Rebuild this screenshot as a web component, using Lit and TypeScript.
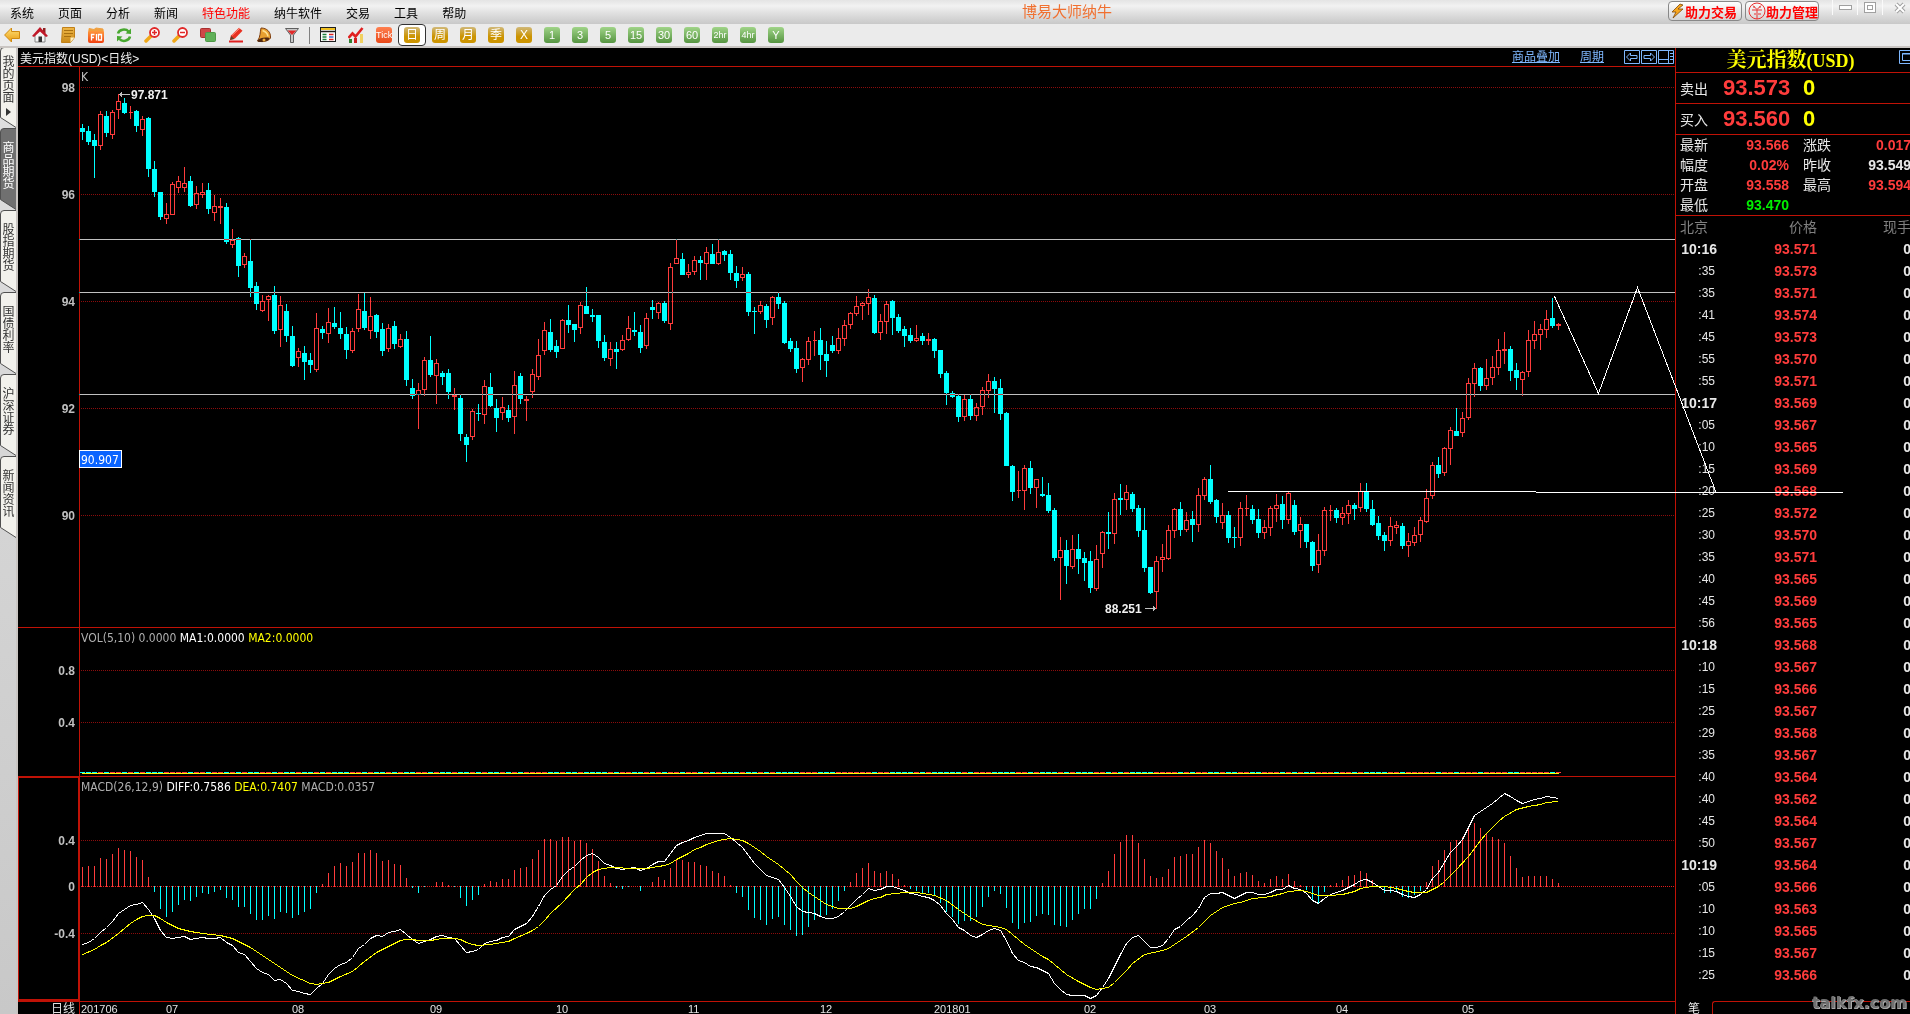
import { LitElement, html, svg, css } from "lit";
import { customElement } from "lit/decorators.js";
import { classMap } from "lit/directives/class-map.js";

/* One candle: direction (u/d), high, open/close top, open/close bottom, low. */
const CANDLES = `
d124,128,132,140 d126,131,142,145 d134,140,146,178 u111,114,146,150 d111,116,133,137 u110,112,135,139
u94,101,110,119 d98,103,113,114 u106,112,113,119 d110,111,126,132 u116,119,130,136 d117,118,169,177
d161,169,192,197 d192,192,217,220 u203,214,219,224 u182,184,215,215 u176,181,188,193 u167,183,188,192
d176,181,206,207 u186,193,205,209 u183,192,195,198 d183,190,209,214 u195,206,213,221 u198,206,208,224
d203,207,242,244 u229,240,245,248 d237,238,266,277 u253,256,265,268 d239,261,288,297 d282,286,304,310
u295,301,311,312 u295,296,300,321 d286,295,331,334 u296,305,330,347 d304,311,336,342 d326,336,366,367
u348,351,358,367 d346,353,362,380 d353,360,365,373 u313,328,370,372 d326,329,333,339 u308,322,334,343
d307,323,327,329 d312,328,334,339 d327,334,350,359 u328,331,351,353 u294,309,329,332 d293,311,328,330
u297,316,331,339 d314,315,332,338 d323,329,351,356 u324,328,349,352 d321,326,344,349 u334,339,347,348
d331,339,380,386 d379,388,396,399 u383,390,395,429 u357,360,390,396 d336,360,375,377 u359,363,376,404
d371,373,377,385 d369,373,392,399 u388,395,397,410 d394,398,434,441 d434,437,445,462 u409,411,437,440
d404,413,414,421 u380,386,415,424 d373,387,406,407 d399,408,418,432 u397,407,413,420 d405,410,418,422
u371,385,417,434 d373,376,399,404 u396,399,401,421 u369,374,392,398 u339,355,377,380 u322,330,351,355
d319,332,350,352 d340,346,352,358 u319,320,349,349 d305,320,325,333 d324,324,330,342 u302,305,328,334
d287,306,314,314 d309,315,317,322 d315,315,341,348 d335,342,358,361 u342,349,359,366 d342,349,352,369
u335,340,350,351 u316,328,340,341 d312,330,332,336 d325,332,348,353 u313,318,346,349 d300,307,310,319
u302,303,313,319 d301,303,321,323 u263,267,324,330 u239,258,264,264 d253,259,275,275 u264,272,275,278
u256,260,272,275 d256,260,263,280 u247,252,264,280 d244,254,264,264 u239,252,264,265 d250,251,255,261
d250,254,273,280 d266,273,281,288 u267,274,278,281 d272,274,312,316 d307,311,312,334 u301,305,312,314
d304,306,320,328 u296,297,318,325 d292,297,304,309 d301,303,343,344 d338,341,349,352 d341,348,369,373
u358,359,368,382 u337,341,360,365 u331,340,341,356 d328,340,355,370 d341,354,361,377 d336,345,351,353
u328,338,351,354 u320,325,339,346 u312,313,325,329 u296,306,314,316 u302,303,306,320 u289,297,304,315
d295,298,333,334 u314,321,333,340 u301,304,322,334 d300,301,318,335 d314,317,331,333 d326,329,336,347
d328,335,341,343 u325,338,341,342 d333,336,341,345 u333,339,341,345 d338,339,351,358 d350,350,374,378
d371,373,393,405 d391,393,397,398 d394,396,417,422 u395,399,417,421 d394,399,416,420 u403,407,416,421
u387,390,407,415 u374,381,391,398 d377,381,389,413 d379,388,414,420 d412,413,466,466 d465,466,492,501
u471,490,491,498 u465,468,491,510 d461,468,488,494 u479,479,488,508 d477,494,496,497 d483,495,511,513
d508,510,558,561 u537,550,558,600 d540,550,566,584 u535,549,567,569 d534,549,559,574 d552,558,563,581
d551,561,588,593 u545,559,589,591 u531,532,554,568 d512,532,534,549 u493,499,534,544 d484,498,500,515
u485,492,500,510 d492,494,509,512 d505,508,531,537 d508,530,568,572 d567,567,593,594 u556,561,592,609
u544,557,560,572 u525,530,559,560 u508,509,531,538 d502,509,530,536 u512,520,530,532 d511,519,525,542
u488,495,525,532 u477,479,496,500 d465,479,502,504 d499,500,517,523 u503,515,523,529 d511,515,538,543
d527,537,538,548 u502,508,538,546 u495,508,509,516 d505,509,520,524 d509,519,533,538 u520,527,533,539
u506,508,528,536 u494,505,509,522 d496,504,520,529 u492,493,520,524 d500,505,532,535 u517,524,531,548
d524,524,542,548 d541,542,566,571 u534,550,565,573 u507,510,551,556 u505,510,511,521 d508,510,518,523
u507,513,518,525 u500,505,514,524 d503,505,509,520 u483,491,508,512 d483,492,509,512 d500,509,525,526
d516,523,536,540 d532,535,541,551 u517,526,541,546 u521,525,528,534 d523,526,546,549 u533,541,546,557
u527,535,543,546 u517,520,535,542 u489,498,522,523 u462,465,496,499 d457,465,474,478 u447,448,473,476
u427,430,449,465 d408,431,436,436 u412,418,433,437 u378,383,418,420 u363,368,384,397 d367,368,386,391
u359,378,386,390 u356,367,378,385 u339,350,368,375 u332,349,351,364 d346,349,371,381 d363,370,378,390
u371,372,380,396 u330,340,372,377 u321,334,341,349 u324,329,335,350 u310,319,330,338 d298,318,326,328
u323,324,326,330`
  .trim()
  .split(/\s+/)
  .map((s) => ({ up: s[0] === "u", v: s.slice(1).split(",").map(Number) }));

const HISTOGRAM = [
  19, 20, 20, 28, 27, 32, 38, 36, 35, 29, 26, 9, -6, -23, -31, -26, -19, -14, -15, -11, -7, -8, -6, -4, -12, -14, -21,
  -21, -28, -34, -34, -30, -33, -26, -27, -32, -29, -26, -23, -7, 2, 13, 20, 23, 20, 24, 33, 33, 36, 33, 25, 26, 22, 21,
  8, -2, -7, -1, 0, 4, 4, 1, -1, -12, -20, -14, -9, 2, 5, 4, 7, 7, 16, 18, 19, 27, 36, 47, 47, 45, 49, 49, 45, 46, 43,
  37, 25, 10, 3, -2, -3, -1, 0, -5, 0, 4, 9, 6, 18, 27, 26, 24, 24, 21, 20, 15, 13, 10, 1, -7, -11, -24, -32, -34, -39,
  -33, -31, -39, -44, -50, -49, -41, -34, -31, -29, -23, -15, -5, 4, 13, 18, 23, 15, 13, 15, 12, 7, 1, -3, -5, -7, -7,
  -10, -17, -26, -31, -38, -35, -35, -31, -21, -11, -5, -8, -22, -37, -43, -37, -36, -30, -28, -29, -39, -40, -41, -34,
  -28, -23, -23, -13, 3, 15, 32, 44, 51, 51, 43, 27, 10, 8, 9, 17, 29, 30, 32, 32, 39, 46, 43, 35, 28, 17, 10, 13, 14,
  11, 5, 3, 7, 10, 7, 12, 5, 1, -4, -14, -17, -6, 1, 3, 6, 10, 11, 15, 13, 6, -1, -7, -7, -5, -11, -12, -9, -5, 4, 20,
  26, 36, 44, 46, 49, 57, 63, 58, 52, 49, 47, 43, 30, 18, 9, 10, 10, 10, 10, 7, 3,
];

const DIFF = [
  944, 942, 938, 932, 927, 921, 913, 909, 905, 904, 902, 909, 918, 930, 937, 938, 937, 936, 939, 938, 937, 938, 938,
  937, 942, 945, 952, 954, 961, 968, 972, 974, 980, 979, 983, 990, 991, 993, 994, 988, 983, 974, 968, 964, 962, 957,
  948, 944, 938, 935, 936, 932, 931, 929, 934, 939, 943, 941, 939, 936, 935, 937, 938, 945, 952, 951, 949, 943, 941,
  940, 937, 936, 929, 926, 923, 916, 906, 895, 889, 885, 876, 870, 866, 860, 855, 853, 857, 863, 865, 868, 869, 868,
  867, 870, 868, 864, 861, 861, 853, 845, 842, 840, 837, 835, 833, 833, 833, 833, 837, 842, 847, 855, 863, 869, 875,
  877, 879, 887, 896, 906, 911, 912, 913, 916, 918, 918, 916, 911, 905, 899, 894, 888, 890, 889, 886, 886, 888, 890,
  893, 894, 896, 897, 900, 905, 913, 919, 927, 930, 935, 937, 934, 930, 928, 930, 940, 953, 960, 962, 966, 967, 970,
  973, 983, 989, 994, 995, 995, 995, 998, 995, 987, 978, 966, 954, 943, 937, 935, 941, 947, 947, 945, 938, 929, 926,
  920, 915, 908, 897, 893, 893, 892, 895, 898, 895, 892, 892, 894, 894, 892, 889, 889, 885, 888, 889, 893, 900, 903,
  898, 894, 892, 890, 887, 884, 880, 879, 882, 886, 890, 890, 891, 894, 896, 897, 894, 889, 878, 872, 862, 852, 846,
  839, 827, 815, 811, 807, 803, 798, 793, 796, 800, 803, 801, 799, 798, 796, 797, 798,
];

/* Signal line knots: candle index and level. */
const DEA: [number, number][] = (
  "0:954 2:949 3:945 4:942 6:933 8:923 9:919 10:916 11:915 12:915 13:918 14:922 16:928 18:931 20:933 23:935 25:938 " +
  "26:941 28:947 30:955 32:963 33:967 35:975 38:983 39:984 40:983 41:982 43:976 45:971 46:966 47:961 49:952 51:946 " +
  "53:940 54:939 55:939 56:940 58:940 60:938 62:938 63:939 64:942 65:944 66:945 68:944 71:941 72:938 74:933 75:930 " +
  "76:926 77:920 78:913 80:902 82:889 83:884 84:877 85:872 86:869 88:867 89:867 91:868 94:868 95:867 97:865 98:863 " +
  "99:859 101:853 102:849 103:847 104:844 106:840 108:838 110:840 111:843 113:851 114:856 116:864 118:874 119:881 " +
  "120:887 121:892 123:900 124:904 126:908 128:908 129:906 130:903 131:900 132:898 133:897 134:894 137:892 139:892 " +
  "142:895 144:900 146:909 148:917 150:924 153:927 154:929 155:934 157:944 160:956 161:959 164:974 166:981 168:987 " +
  "169:989 171:987 172:982 173:976 174:970 175:963 177:954 180:950 181:948 184:936 186:927 188:915 190:907 192:903 " +
  "193:902 195:898 197:897 198:896 200:893 201:891 203:890 204:891 206:895 208:895 210:894 212:891 213:888 215:886 " +
  "217:886 219:888 221:891 222:892 224:892 226:886 227:881 229:869 231:856 233:840 234:833 235:827 236:821 237:816 " +
  "239:809 241:806 243:804 244:802 246:801"
)
  .split(" ")
  .map((p) => p.split(":").map(Number) as [number, number]);

const TICKS = (
  "10:16 571,:35 573,:35 571,:41 574,:45 573,:55 570,:55 571,10:17 569,:05 567,:10 565,:15 569,:20 568,:25 572," +
  ":30 570,:35 571,:40 565,:45 569,:56 565,10:18 568,:10 567,:15 566,:25 567,:29 568,:35 567,:40 564,:40 562," +
  ":45 564,:50 567,10:19 564,:05 566,:10 563,:10 565,:15 567,:25 566"
)
  .split(",")
  .map((t) => t.split(" "));

/* Candle pitch is 6px; the plot starts right of the axis column. */
const AXIS = 61;
const cx = (k: number) => AXIS + 3 + 6 * k;

const PRICE_TOP = 67;
const MACD_TOP = 777;
const ZERO = 886 - MACD_TOP;

@customElement("price-panel")
export class PricePanel extends LitElement {
  static styles = css`
    :host { display: block; height: 560px; }
    svg { display: block; width: 100%; height: 100%; font: bold 12px "Liberation Sans", Arial, sans-serif; }
    .crisp { shape-rendering: crispEdges; fill: none; }
    .grid { stroke: #8c0c0c; stroke-dasharray: 1 1; }
    .frame { stroke: #c01206; }
    .level { stroke: #c0c0c0; mix-blend-mode: difference; }
    .up { stroke: #ff3c3c; }
    .down { stroke: #00ffff; }
    .body { fill: #00ffff; }
    .scale { fill: #c0c0c0; text-anchor: end; }
    .name { fill: #c0c0c0; font: 12px "DejaVu Sans Condensed", "Noto Sans", sans-serif; }
    .mark { fill: #f0f0f0; }
    .arrow { stroke: #c0c0c0; }
    .cursor { fill: #0a64ff; stroke: #ffffff; shape-rendering: crispEdges; }
    .cursor-text { fill: #ffffff; font: 12px "DejaVu Sans Condensed", "Noto Sans", sans-serif; }
  `;

  render() {
    let up = "";
    let down = "";
    let body = "";
    CANDLES.forEach((c, k) => {
      const [h, t, b, l] = c.v.map((n) => n - PRICE_TOP);
      const x = cx(k);
      if (c.up) {
        up += `M${x + 0.5} ${h}V${t}M${x + 0.5} ${b}V${l}M${x - 1.5} ${t + 0.5}h4v${b - t - 1}h-4z`;
      } else {
        down += `M${x + 0.5} ${h}V${l}`;
        body += `M${x - 2} ${t}h5v${b - t}h-5z`;
      }
    });
    const rows = [98, 96, 94, 92, 90].map((v, i) => ({ v, y: 20 + i * 107 }));
    return html`<svg role="img" aria-label="K">
      ${rows.map(
        (r) => svg`<line class="crisp grid" x1="63" x2="100%" y1=${r.y + 0.5} y2=${r.y + 0.5}></line>
          <text class="scale" x="57" y=${r.y + 5}>${r.v}</text>`
      )}
      <line class="crisp frame" x1="61.5" x2="61.5" y1="0" y2="100%"></line>
      <path class="crisp up" d=${up}></path>
      <path class="crisp down" d=${down}></path>
      <path class="body" d=${body}></path>
      ${[172, 225, 327].map(
        (y) => svg`<line class="crisp level" x1="61" x2="100%" y1=${y + 0.5} y2=${y + 0.5}></line>`
      )}
      <text class="name" x="63" y="14">K</text>
      <path class="crisp arrow" d="M101 27.5h11M102.5 26v3M103.5 25v5"></path>
      <text class="mark" x="113" y="32">97.871</text>
      <text class="mark" x="1087" y="546">88.251</text>
      <path class="crisp arrow" d="M1127 541.5h11M1135.5 539v5M1136.5 540v3"></path>
      <rect class="cursor" x="61.5" y="383.5" width="42" height="17"></rect>
      <text class="cursor-text" x="63" y="397">90.907</text>
    </svg>`;
  }
}

@customElement("volume-panel")
export class VolumePanel extends LitElement {
  static styles = css`
    :host { display: block; height: 148px; border-top: 1px solid #c01206; }
    svg { display: block; width: 100%; height: 100%; font: bold 12px "Liberation Sans", Arial, sans-serif; }
    .crisp { shape-rendering: crispEdges; fill: none; }
    .grid { stroke: #8c0c0c; stroke-dasharray: 1 1; }
    .frame { stroke: #c01206; }
    .up { stroke: #ff3c3c; }
    .down { stroke: #00ffff; }
    .average { stroke: #ffff00; }
    .scale { fill: #c0c0c0; text-anchor: end; }
    .legend { font: 12px "DejaVu Sans Condensed", "Noto Sans", sans-serif; fill: #b0b0b0; }
    .white { fill: #ffffff; }
    .yellow { fill: #ffff00; }
  `;

  render() {
    const dashes = (up: boolean) => CANDLES.map((c, k) => (c.up === up ? `M${cx(k) - 2} 144.5h5` : "")).join("");
    return html`<svg role="img" aria-label="VOL">
      ${[
        ["0.8", 42],
        ["0.4", 94],
      ].map(
        ([v, y]) => svg`<line class="crisp grid" x1="63" x2="100%" y1=${+y + 0.5} y2=${+y + 0.5}></line>
          <text class="scale" x="57" y=${+y + 5}>${v}</text>`
      )}
      <line class="crisp frame" x1="61.5" x2="61.5" y1="0" y2="100%"></line>
      <path class="crisp up" d=${dashes(true)}></path>
      <path class="crisp down" d=${dashes(false)}></path>
      <line class="crisp average" x1="64" x2="1541" y1="145.5" y2="145.5"></line>
      <text class="legend" x="63" y="14">VOL(5,10) 0.0000 <tspan class="white">MA1:0.0000</tspan> <tspan class="yellow">MA2:0.0000</tspan></text>
    </svg>`;
  }
}

@customElement("macd-panel")
export class MacdPanel extends LitElement {
  static styles = css`
    :host { display: block; height: 224px; border-top: 1px solid #c01206; border-bottom: 1px solid #c01206; }
    svg { display: block; width: 100%; height: 100%; font: bold 12px "Liberation Sans", Arial, sans-serif; }
    .crisp { shape-rendering: crispEdges; fill: none; }
    .grid { stroke: #8c0c0c; stroke-dasharray: 1 1; }
    .zero { stroke: #e01c1c; stroke-dasharray: 1 1; }
    .frame { stroke: #c01206; }
    .focus { stroke: #c01206; stroke-width: 2; }
    .up { stroke: #ff3c3c; }
    .down { stroke: #00ffff; }
    .diff { stroke: #ffffff; }
    .dea { stroke: #ffff00; }
    .scale { fill: #c0c0c0; text-anchor: end; }
    .legend { font: 12px "DejaVu Sans Condensed", "Noto Sans", sans-serif; fill: #b0b0b0; }
    .white { fill: #ffffff; }
    .yellow { fill: #ffff00; }
  `;

  render() {
    const bars = (up: boolean) =>
      HISTOGRAM.map((v, k) => {
        if (v === 0 || v > 0 !== up) return "";
        return up ? `M${cx(k) + 0.5} ${ZERO + 1}v${-v - 1}` : `M${cx(k) + 0.5} ${ZERO}v${-v}`;
      }).join("");
    const points = (list: [number, number][]) => list.map(([k, y]) => `${cx(k) + 0.5},${y - MACD_TOP + 0.5}`).join(" ");
    return html`<svg role="img" aria-label="MACD">
      ${[
        ["0.4", 63],
        ["0", 109],
        ["-0.4", 156],
      ].map(
        ([v, y]) => svg`<line class="crisp ${v === "0" ? "zero" : "grid"}" x1="63" x2="100%" y1=${+y + 0.5} y2=${+y + 0.5}></line>
          <text class="scale" x="57" y=${+y + 5}>${v}</text>`
      )}
      <rect class="crisp focus" x="0" y="0" width="61" height="223"></rect>
      <line class="crisp frame" x1="61.5" x2="61.5" y1="0" y2="100%"></line>
      <path class="crisp up" d=${bars(true)}></path>
      <path class="crisp down" d=${bars(false)}></path>
      <polyline class="crisp diff" points=${points(DIFF.map((y, k) => [k, y] as [number, number]))}></polyline>
      <polyline class="crisp dea" points=${points(DEA)}></polyline>
      <text class="legend" x="63" y="14">MACD(26,12,9) <tspan class="white">DIFF:0.7586</tspan> <tspan class="yellow">DEA:0.7407</tspan> MACD:0.0357</text>
    </svg>`;
  }
}

@customElement("date-axis")
export class DateAxis extends LitElement {
  static styles = css`
    :host { display: block; flex: 1; min-height: 12px; }
    svg { display: block; width: 100%; height: 100%; font: 11px "Liberation Sans", Arial, sans-serif; fill: #e4e4e4; }
    .period { font: 12px "Noto Sans CJK SC", sans-serif; text-anchor: end; }
    .frame { stroke: #c01206; shape-rendering: crispEdges; }
  `;

  render() {
    const dates: [string, number][] = [
      ["201706", 63], ["07", 148], ["08", 274], ["09", 412], ["10", 538], ["11", 670], ["12", 802],
      ["201801", 916], ["02", 1066], ["03", 1186], ["04", 1318], ["05", 1444],
    ];
    return html`<svg role="img" aria-label="日线">
      <line class="frame" x1="61.5" x2="61.5" y1="0" y2="100%"></line>
      <text class="period" x="57" y="11">日线</text>
      ${dates.map(([t, x]) => svg`<text x=${x} y="11">${t}</text>`)}
    </svg>`;
  }
}

@customElement("quote-sidebar")
export class QuoteSidebar extends LitElement {
  static styles = css`
    :host {
      display: flex; flex-direction: column; flex: none; width: 234px; overflow: hidden;
      border-left: 1px solid #c01206; background: #000; color: #e8e8e8;
      font: 14px "Liberation Sans", "Noto Sans CJK SC", sans-serif;
    }
    .title { display: flex; align-items: center; height: 24px; border-bottom: 1px solid #c01206; color: #ffff00; }
    .name { flex: 1; margin: 0; text-align: center; font: bold 20px/24px "Liberation Serif", "Noto Serif CJK SC", "Noto Sans CJK SC", serif; padding-left: 6px; }
    .code { font-size: 18px; }
    .restore { width: 11px; height: 22px; padding: 0; border: 0; background: none; overflow: hidden; flex: none; }
    .restore svg { display: block; }
    .side { display: flex; align-items: center; height: 30px; border-bottom: 1px solid #c01206; padding-left: 4px; }
    .side-label { width: 43px; }
    .side-price { width: 80px; color: #ff3c3c; font-size: 22px; font-weight: bold; }
    .side-volume { color: #ffff00; font-size: 22px; font-weight: bold; }
    table { border-collapse: collapse; table-layout: fixed; width: 235px; }
    th, td { padding: 0; font-weight: normal; text-align: left; white-space: nowrap; overflow: hidden; line-height: 20px; }
    .stats { border-bottom: 1px solid #c01206; flex: none; overflow: hidden; }
    .stats th { padding-left: 4px; height: 20px; }
    .stats td { text-align: right; font-weight: bold; }
    .stats th + td + th { padding-left: 14px; }
    .c1 { width: 42px; }
    .c2 { width: 71px; }
    .c3 { width: 52px; }
    .red { color: #ff3c3c; }
    .green { color: #00f000; }
    .ticks th { color: #808080; }
    .ticks th, .ticks td { height: 22px; }
    .ticks th:first-child { padding-left: 4px; }
    .ticks td:first-child { text-align: right; padding-right: 22px; font-size: 12px; }
    .ticks .minute td:first-child { font-size: 14px; font-weight: bold; padding-right: 20px; }
    .ticks th + th, .ticks td + td { text-align: right; }
    .ticks td + td { font-weight: bold; }
    .t1 { width: 61px; }
    .t2 { width: 80px; }
    .foot { display: flex; margin-top: auto; height: 13px; overflow: hidden; }
    .foot-label { width: 36px; padding-left: 12px; box-sizing: border-box; font-size: 12px; line-height: 16px; }
    .foot-box { flex: 1; border-top: 1px solid #c01206; border-left: 1px solid #c01206; border-radius: 3px 0 0 0; }
    .mark {
      position: fixed; right: 3px; bottom: 2px; color: #707070; font: bold 16px/18px "DejaVu Sans", sans-serif;
      text-shadow: 1px 1px 0 #a8a8a8, 0 1px 0 #a8a8a8;
    }
  `;

  render() {
    const stats = [
      ["最新", "93.566", "red", "涨跌", "0.017", "red"],
      ["幅度", "0.02%", "red", "昨收", "93.549", ""],
      ["开盘", "93.558", "red", "最高", "93.594", "red"],
      ["最低", "93.470", "green", "", "", ""],
    ];
    return html`
      <div class="title">
        <h2 class="name">美元指数<span class="code">(USD)</span></h2>
        <button class="restore" aria-label="还原">
          <svg width="16" height="22" fill="none" stroke="#7fb8ff"><path d="M.5 1.5h15v13H.5zM3.5 4.5h10v7h-10zM3 5h11" /></svg>
        </button>
      </div>
      ${[["卖出", "93.573"], ["买入", "93.560"]].map(
        ([l, p]) => html`<div class="side">
          <span class="side-label">${l}</span><span class="side-price">${p}</span><span class="side-volume">0</span>
        </div>`
      )}
      <div class="stats">
        <table>
          <colgroup><col class="c1" /><col class="c2" /><col class="c3" /><col /></colgroup>
          ${stats.map(
            (s) => html`<tr>
              <th scope="row">${s[0]}</th><td class=${s[2]}>${s[1]}</td><th scope="row">${s[3]}</th><td class=${s[5]}>${s[4]}</td>
            </tr>`
          )}
        </table>
      </div>
      <table class="ticks">
        <colgroup><col class="t1" /><col class="t2" /><col /></colgroup>
        <thead><tr><th>北京</th><th>价格</th><th>现手</th></tr></thead>
        <tbody>
          ${TICKS.map(
            ([t, p]) => html`<tr class=${classMap({ minute: !t.startsWith(":") })}>
              <td>${t}</td><td class="red">93.${p}</td><td>0</td>
            </tr>`
          )}
        </tbody>
      </table>
      <div class="foot"><span class="foot-label">笔</span><span class="foot-box"></span></div>
      <span class="mark">talkfx.com</span>
    `;
  }
}

const gradients = svg`<defs>
  <linearGradient id="g" x2="0" y2="1"><stop stop-color="#ffe27a" /><stop offset="1" stop-color="#e89a10" /></linearGradient>
  <linearGradient id="n" x2="0" y2="1"><stop stop-color="#f0b848" /><stop offset="1" stop-color="#c88818" /></linearGradient>
  <linearGradient id="o" x2="0" y2="1"><stop stop-color="#ffa040" /><stop offset="1" stop-color="#f04010" /></linearGradient>
</defs>`;

const icon = (body: unknown) => html`<svg width="16" height="16" viewBox="0 0 16 16" fill="none">${gradients}${body}</svg>`;

const TOOLS: [string, unknown][] = [
  ["后退", svg`<path d="M.6 8 7.5 1V4.5H15.5v7H7.5V15z" fill="url(#g)" stroke="#d08a10" />`],
  ["首页", svg`<path d="M3 8v7h10V8L8 3z" fill="#f4f4f4" stroke="#888" /><path d="M6.5 9.5h3.500V15h-3.500z" fill="#333" /><path d="M11 1h2.500v5H11z" fill="#902020" /><path d="M0 9 8 0l8 9-2 1L8 4.500 2 10z" fill="#c01828" />`],
  ["便笺", svg`<path d="M2.500.500h12v10l-4 5H1.500z" fill="url(#n)" stroke="#c08018" /><path d="M4 3.500h9M4 6.500h9M4 9.500h7" stroke="#a87010" /><path d="M14.500 10.500h-4v5z" fill="#fff0c0" />`],
  ["F10", svg`<rect x="0" y="3" width="16" height="13" rx="2" fill="url(#o)" /><path d="M1 4V1.500l5 1 2-1.500 7 1V4" fill="#f0a040" stroke="#f0a040" /><path d="M3.500 13.500V7.500H6.500M3.500 10.500H6M8.500 7v6.500M10.500 7.500h3v5.500h-3z" stroke="#fff" stroke-width="1.300" />`],
  ["刷新", svg`<path d="M2 6.500C3 2 10 1.500 12.500 4.500M14 9.500c-1 5-8 5.500-10.500 2.500" stroke="#48a830" stroke-width="2.500" /><path d="m9.500 6.500 5.500.500V1.500zM6.500 9.500 1 9v5.500z" fill="#48a830" />`],
  ["放大", svg`<path d="m2 14 5-5" stroke="#f0a818" stroke-width="3.500" stroke-linecap="round" /><circle cx="10.500" cy="5.500" r="4.500" fill="#fff" stroke="#e02828" stroke-width="1.800" /><path d="M8 5.500h5M10.500 3v5" stroke="#e02828" stroke-width="1.500" />`],
  ["缩小", svg`<path d="m2 14 5-5" stroke="#f0a818" stroke-width="3.500" stroke-linecap="round" /><circle cx="10.500" cy="5.500" r="4.500" fill="#fff" stroke="#e02828" stroke-width="1.800" /><path d="M8 5.500h5" stroke="#e02828" stroke-width="1.500" />`],
  ["叠加", svg`<rect x=".5" y="1.500" width="10" height="9" rx="1" fill="#d04848" stroke="#a83030" /><rect x="5.500" y="5.500" width="10" height="9" rx="1" fill="#60b058" stroke="#509848" />`],
  ["画线", svg`<path d="M1 14.500h14" stroke="#e02020" stroke-width="2" /><path d="m2 13 1-4.500L11 .8l3.500 3L7 11.500z" fill="#e83020" /><path d="M2 13l1-4 3.500 3z" fill="#604028" /><path d="m4 8.500 8-7.500" stroke="#ff9080" />`],
  ["预警", svg`<path d="M5 1c6 0 10 4 9.500 10-2 3-7 4.500-13 3C4.500 10 4 5 5 1z" fill="#e8a030" stroke="#804010" /><path d="M6.500 3.500c3 1 5 3 5.500 6" stroke="#ffe090" stroke-width="1.500" /><ellipse cx="7.500" cy="12.800" rx="6" ry="2" fill="#502810" transform="rotate(-12 7.500 12.800)" /><circle cx="8" cy="13" r="1.500" fill="#f0b040" />`],
  ["筛选", svg`<path d="M1.500 1.500h13L9.500 8v7.500h-3V8z" fill="#c8c8c8" stroke="#606060" /><path d="M3.500 3.500h9L8 8z" fill="#e02828" />`],
];

const VIEWS: [string, unknown][] = [
  ["报价", svg`<rect x=".5" y=".5" width="15" height="14" fill="#fff" stroke="#202020" /><path d="M1 2h14" stroke="#f0c020" stroke-width="2" /><path d="M0 4.500h16" stroke="#202020" stroke-width="1.500" /><path d="M2.500 7.500h4M2.500 10h4M2.500 12.500h4" stroke="#208040" stroke-width="1.300" /><path d="M9 7.500h4.500M9 12.500h4.500" stroke="#e02020" stroke-width="1.300" /><path d="M9 10h4.500" stroke="#2050c0" stroke-width="1.300" />`],
  ["走势", svg`<path d="M1 12h3v4H1z" fill="#308030" /><path d="M6 11h3v5H6z" fill="#d02020" /><path d="M12 7h3v9h-3z" fill="#f0d060" /><path d="m.5 11 4-4.500 3 3 7-8.500" stroke="#e02020" stroke-width="2.600" />`],
];

const PERIODS: [string, string][] = [
  ["Tick", "tick"], ["日", "gold"], ["周", "gold"], ["月", "gold"], ["季", "gold"], ["X", "gold"],
  ["1", "lime"], ["3", "lime"], ["5", "lime"], ["15", "lime"], ["30", "lime"], ["60", "lime"],
  ["2hr", "lime"], ["4hr", "lime"], ["Y", "lime"],
];

@customElement("app-root")
export class AppRoot extends LitElement {
  static styles = css`
    :host {
      display: flex; flex-direction: column; height: 100vh; overflow: hidden; background: #d4d4d4;
      font: 12px "Liberation Sans", "Noto Sans CJK SC", sans-serif; color: #000;
    }
    button { font: inherit; color: inherit; border: 0; background: none; padding: 0; margin: 0; }
    .menubar { display: flex; flex: none; height: 24px; background: linear-gradient(#e4e4e4, #f2f2f2 25%, #e0e0e0 55%, #c8c8c8); }
    .menus { display: flex; gap: 24px; padding-left: 10px; }
    .hot { color: #ff0000; }
    .app-title { flex: 1; margin: 0; text-align: center; font: 15px/22px "Noto Sans CJK SC", sans-serif; color: #f07030; }
    .actions { display: flex; gap: 3px; padding-top: 1px; }
    .action {
      display: flex; align-items: center; width: 74px; height: 20px; box-sizing: border-box; padding: 0 2px; overflow: hidden;
      border: 1px solid #888; border-radius: 4px; background: linear-gradient(#fff, #d4d4d4);
      color: #ff0000; font-weight: bold; font-size: 13px; white-space: nowrap;
    }
    .action svg { flex: none; }
    .window { display: flex; padding-left: 13px; width: 91px; box-sizing: border-box; overflow: hidden; }
    .window button { width: 25px; height: 15px; flex: none; border-left: 1px solid #fafafa; display: flex; justify-content: center; align-items: center; }
    .window button:last-child { width: 34px; }
    .toolbar { display: flex; flex: none; height: 22px; background: #ebebeb; border-bottom: 2px solid #c9c5c2; }
    .tool { width: 28px; display: flex; align-items: center; justify-content: center; flex: none; }
    .tools { display: flex; margin-left: -2px; }
    .divider { width: 1px; margin: 3px 4px 2px 3px; background: #808080; }
    .on { background: #fff; border: 1px solid #333; border-radius: 4px; box-sizing: border-box; height: 22px; }
    .chip { width: 16px; height: 16px; border-radius: 3px; color: #fff; font-size: 12px; line-height: 16px; text-align: center; overflow: hidden; }
    .gold { background: linear-gradient(#d0b878, #cc9400 60%); }
    .lime { background: linear-gradient(#a0d488, #559440); font-size: 11px; }
    .tick { background: linear-gradient(#ff8050, #e84818); }
    .small { font-size: 9px; }
    .work { display: flex; flex: 1; min-height: 0; position: relative; }
    .rail { width: 16px; flex: none; border-right: 2px solid #c9c5c2; background: linear-gradient(#e0e0e0, #c8c8c8); }
    .tab { position: relative; display: flex; flex-direction: column; align-items: center; width: 16px; height: 82px; padding: 14px 0 0 1px; box-sizing: border-box; font-size: 12px; line-height: 12px; color: #333; }
    .tab:first-child { padding-top: 8px; height: 80px; }
    .tab-shape { position: absolute; left: 0; top: 0; }
    .tab-shape path { fill: #f2f1ec; stroke: #505050; }
    .tab.current { color: #fff; }
    .tab.current .tab-shape path { fill: #707070; }
    .tab-text { position: relative; width: 12px; white-space: normal; word-break: break-all; }
    .more { position: relative; margin-top: 4px; }
    .charts { flex: 1; min-width: 0; display: flex; flex-direction: column; background: #000; overflow: hidden; }
    .chart-head { display: flex; align-items: center; flex: none; height: 18px; border-bottom: 1px solid #c01206; color: #f0f0f0; padding-left: 2px; }
    .chart-title { flex: 1; }
    .chart-head a { color: #7fb8ff; margin-right: 20px; line-height: 14px; }
    .boxes { display: flex; gap: 1px; padding-right: 1px; height: 16px; }
    .boxes button { width: 16px; }
    .drawing { position: absolute; left: 1210px; top: 230px; pointer-events: none; }
  `;

  render() {
    const menus = ["系统", "页面", "分析", "新闻", "特色功能", "纳牛软件", "交易", "工具", "帮助"];
    const tabs = ["我的页面", "商品期货", "股指期货", "国债利率", "沪深证券", "新闻资讯"];
    return html`
      <header class="menubar">
        <nav class="menus">
          ${menus.map((m) => html`<button class=${classMap({ hot: m === "特色功能" })}>${m}</button>`)}
        </nav>
        <h1 class="app-title">博易大师纳牛</h1>
        <div class="actions">
          <button class="action">
            <svg width="14" height="16"><path d="M9 1 1 9h4l-3 6 10-9H7l5-4z" fill="#f8a820" stroke="#804808" stroke-width=".8" /></svg>助力交易
          </button>
          <button class="action">
            <svg width="18" height="18" fill="none" stroke="#e83030"><circle cx="9" cy="9" r="8" /><path d="M5 3.500l4 4 4-4M4 8h10M6 12h2M10 12h3M9 8v9M5 5h2M11 5h2" /></svg>助力管理
          </button>
        </div>
        <div class="window">
          <button aria-label="最小化"><svg width="13" height="6" fill="#fff" stroke="#a0a0a0"><rect x=".5" y=".5" width="12" height="4" /></svg></button>
          <button aria-label="最大化"><svg width="13" height="12" fill="#fff" stroke="#a0a0a0"><rect x=".5" y=".5" width="11" height="10" /><rect x="3.500" y="3.500" width="5" height="4" /></svg></button>
          <button aria-label="关闭"><svg width="12" height="12" fill="none"><path d="m2 2 8 8M10 2l-8 8" stroke="#a0a0a0" stroke-width="4" /><path d="m2 2 8 8M10 2l-8 8" stroke="#fff" stroke-width="2" /></svg></button>
        </div>
      </header>
      <div class="toolbar">
        <div class="tools">
          ${TOOLS.map(([n, i]) => html`<button class="tool" aria-label=${n}>${icon(i)}</button>`)}
          <span class="divider"></span>
          ${VIEWS.map(([n, i]) => html`<button class="tool" aria-label=${n}>${icon(i)}</button>`)}
          ${PERIODS.map(
            ([n, c]) => html`<button class=${classMap({ tool: true, on: n === "日" })}>
              <span class="chip ${c} ${n.length > 2 ? "small" : ""}">${n}</span>
            </button>`
          )}
        </div>
      </div>
      <main class="work">
        <nav class="rail">
          ${tabs.map(
            (t, i) => html`<button class=${classMap({ tab: true, current: i === 1 })}>
              <svg class="tab-shape" width="16" height="82"><path d=${i ? "M16 .5H4Q.5 .5 .5 4V71.500L16 81.500" : "M16-.5H4Q.5-.5 .5 3V69.500L16 79.500"} /></svg>
              <span class="tab-text">${t}</span>
              ${i ? "" : html`<svg class="more" width="5" height="8"><path d="M0 0v8l5-4z" fill="#333" /></svg>`}
            </button>`
          )}
        </nav>
        <section class="charts">
          <div class="chart-head">
            <span class="chart-title">美元指数(USD)&lt;日线&gt;</span>
            <a href="#overlay">商品叠加</a><a href="#period">周期</a>
            <span class="boxes">
              <button aria-label="左移"><svg width="16" height="15" fill="none" stroke="#7fb8ff"><path d="M.5 1.500h15v13H.500zM2.500 8l4-4v2.500h6.500v3H6.500V12z" /></svg></button>
              <button aria-label="右移"><svg width="16" height="15" fill="none" stroke="#7fb8ff"><path d="M.5 1.500h15v13H.500zM13.500 8l-4-4v2.500H3v3h6.500V12z" /></svg></button>
              <button aria-label="布局"><svg width="16" height="15" fill="none" stroke="#7fb8ff"><path d="M.5 1.500h15v13H.500zM.5 10.500h10M10.500 1.500v13M12 4.500h3M12 7.500h3M12 10.500h3" /></svg></button>
            </span>
          </div>
          <price-panel></price-panel>
          <volume-panel></volume-panel>
          <macd-panel></macd-panel>
          <date-axis></date-axis>
        </section>
        <quote-sidebar></quote-sidebar>
        <svg class="drawing" width="634" height="226" fill="none" stroke="#fff" shape-rendering="crispEdges">
          <path d="M18 213.500H326M326 214.500H633M344.500 18.500 388.500 115.500 427.500 9.500 506.500 215.500" />
        </svg>
      </main>
    `;
  }
}
